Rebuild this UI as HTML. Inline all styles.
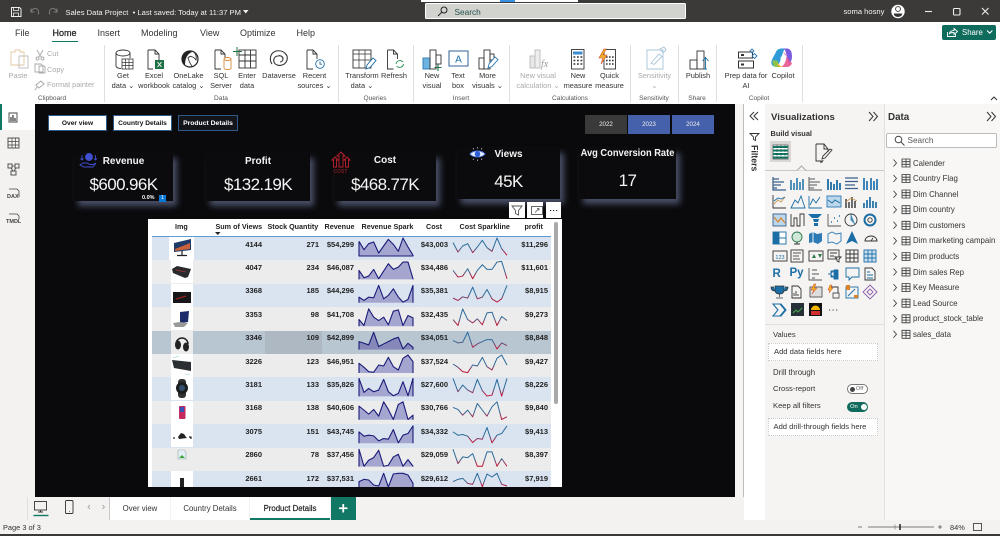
<!DOCTYPE html>
<html><head><meta charset="utf-8"><style>
*{box-sizing:border-box}
html,body{margin:0;padding:0;width:1000px;height:536px;overflow:hidden;background:#f3f2f1;font-family:"Liberation Sans",sans-serif;color:#252423}
body{filter:blur(.25px)}
.a{position:absolute}
svg{position:absolute;overflow:visible}
.t{position:absolute;white-space:nowrap}
.lab{position:absolute;text-align:center;font-size:7.4px;line-height:10.3px;color:#333;white-space:nowrap;transform:translateX(-50%);top:71px}
.dis{color:#aaa}
.gl{position:absolute;top:95px;font-size:6.6px;color:#555;transform:translateX(-50%);white-space:nowrap}
.sep{position:absolute;top:45px;height:57px;width:1px;background:#e1dfdd}
.tab{position:absolute;top:28px;font-size:9px;color:#333}
.btn{position:absolute;top:115px;height:16px;width:59px;background:#fff;border:1px solid #2d5a88;color:#111;font-size:6.6px;font-weight:bold;text-align:center;line-height:15px}
.yr{position:absolute;top:115px;height:19px;width:42px;color:#eee;font-size:6.2px;text-align:center;line-height:19px}
.card{position:absolute;background:#0b0b0d;box-shadow:4px 5px 6px #4a5068;color:#f5f5f5;text-align:center}
.card .h{position:absolute;left:0;right:0;font-weight:bold;font-size:10px;transform:scaleX(.95)}
.card .v{position:absolute;left:0;right:0;font-size:17px;letter-spacing:-.6px}
.r{position:absolute;left:152px;width:399px;height:23.4px}
.r b{position:absolute;top:2.5px;font-size:7.5px;color:#222;font-weight:bold;line-height:10px}
.r b:nth-of-type(1){right:289px}.r b:nth-of-type(2){right:232px}.r b:nth-of-type(3){right:197px}.r b:nth-of-type(4){right:103px}.r b:nth-of-type(5){right:3px}
.o{background:#d9e4f0}.e{background:#ececec}
.th{position:absolute;top:222px;font-size:7.2px;font-weight:bold;color:#222;white-space:nowrap;line-height:10px}
.thumb{position:absolute;left:17px;top:0;width:25px;height:23px;background:#fff}
.d{position:absolute;left:913px;font-size:7.85px;color:#333;white-space:nowrap;line-height:10px}
.sec{position:absolute;font-size:7.6px;color:#333;white-space:nowrap;line-height:10px}
.well{position:absolute;left:768px;width:110px;height:18px;background:#fff;border:1px dotted #ccc;font-size:7.6px;color:#333;line-height:16px;padding-left:5px;white-space:nowrap}
.ptab{position:absolute;top:497px;height:23px;background:#fff;font-size:7.8px;color:#333;text-align:center;line-height:23px;white-space:nowrap}
</style></head><body>

<!-- title bar -->
<div class="a" style="left:0;top:0;width:1000px;height:21.5px;background:#3b3a39"></div>
<div class="a" style="left:421px;top:0;width:157px;height:1.5px;background:#fff"></div>
<div class="a" style="left:500px;top:0;width:15px;height:1.5px;background:#3b8fe0"></div>
<svg style="left:0;top:0" width="100" height="22" fill="none">
<path d="M11.5 7.5h8l1.5 1.5v7.500h-9.500z" stroke="#eee"/><path d="M13.500 7.500v3h5v-3M13.500 16.500v-3.500h5v3.500" stroke="#eee" stroke-width=".8"/>
<path d="M31 12c1-3 4-4.500 6-3 2 1.500 2 4 1 5.500M31 8.500v3.500h3.500" stroke="#7d7c7b"/>
<path d="M57 12c-1-3-4-4.500-6-3-2 1.500-2 4-1 5.500M57 8.500v3.500h-3.500" stroke="#7d7c7b"/>
</svg>
<div class="t" style="left:65.500px;top:7.500px;font-size:7.600px;line-height:10px;color:#f2f2f2">Sales Data Project &nbsp;• Last saved: Today at 11:37 PM</div>
<svg style="left:243px;top:10px" width="6" height="4"><path d="M0 0h5.500l-2.750 3.500z" fill="#eee"/></svg>
<div class="a" style="left:425px;top:3px;width:261px;height:16px;background:#d2d2cf;border:1px solid #fff;border-radius:1.500px"></div>
<svg style="left:437px;top:6px" width="12" height="11" fill="none" stroke="#222"><circle cx="7" cy="4" r="3"/><path d="M4.800 6.200L1 10"/></svg>
<div class="t" style="left:454.500px;top:6.500px;font-size:8.300px;line-height:10px;color:#24514a">Search</div>
<div class="t" style="left:843.500px;top:7px;font-size:7.600px;line-height:10px;color:#f2f2f2">soma hosny</div>
<svg style="left:890px;top:3px" width="110" height="18" fill="none">
<circle cx="8" cy="8.500" r="6.700" fill="#fff"/><circle cx="8" cy="6" r="2.400" stroke="#333" stroke-width=".9"/><path d="M3.800 10.500h8.400c0 2.200-1.800 3.400-4.200 3.400s-4.200-1.200-4.200-3.400z" fill="#333"/>
<path d="M35 8.500h7" stroke="#eee" stroke-width="1.100"/>
<rect x="63.500" y="5.500" width="6.500" height="6.500" rx="1" stroke="#eee" stroke-width="1.100"/>
<path d="M92 5l6.500 6.500M98.500 5L92 11.500" stroke="#eee" stroke-width="1.100"/>
</svg>

<!-- ribbon -->
<div class="a" style="left:0;top:21.500px;width:1000px;height:83px;background:#fff"></div>
<div class="tab" style="left:15px">File</div>
<div class="tab" style="left:52.500px;color:#222;-webkit-text-stroke:.25px #222">Home</div>
<div class="a" style="left:52px;top:40.500px;width:26px;height:1.600px;background:#117865"></div>
<div class="tab" style="left:97.500px">Insert</div>
<div class="tab" style="left:141px">Modeling</div>
<div class="tab" style="left:200px">View</div>
<div class="tab" style="left:240px">Optimize</div>
<div class="tab" style="left:296.500px">Help</div>
<div class="a" style="left:942px;top:25px;width:54px;height:15px;background:#0f6b5c;border-radius:2px"></div>
<svg style="left:946px;top:27px" width="50" height="11" fill="none" stroke="#fff" stroke-width=".9"><path d="M1.500 5v4.500h8V7M3.500 6.500c.5-2 2-3 4.500-3V1.500l3.500 3-3.500 3V5.500c-2 0-3.500 0-4.500 1z"/><path d="M41 3.500l2.700 2.700 2.700-2.700" stroke-width="1.100"/></svg>
<div class="t" style="left:962px;top:27.500px;font-size:7.800px;line-height:10px;color:#fff">Share</div>

<div class="sep" style="left:104px"></div><div class="sep" style="left:338px"></div><div class="sep" style="left:413px"></div><div class="sep" style="left:509px"></div><div class="sep" style="left:630px"></div><div class="sep" style="left:678px"></div><div class="sep" style="left:716px"></div><div class="sep" style="left:802px"></div>

<!-- ribbon icons -->
<svg style="left:0;top:44px" width="830" height="30" fill="none" stroke="#333" stroke-width=".9">
<!-- paste -->
<path d="M11 8h4V6h5v2h4v13H11z" stroke="#e3c7a0"/><rect x="19" y="12" width="9" height="12" stroke="#bbb"/>
<path d="M37 6l4 7M43 6l-4 7" stroke="#aaa"/><circle cx="37.500" cy="14.500" r="1.500" stroke="#aaa"/><circle cx="42.500" cy="14.500" r="1.500" stroke="#aaa"/>
<path d="M35 20h6l2 2v6h-8zM39 22h5l1 1v6h-6z" stroke="#aaa"/>
<!-- get data -->
<ellipse cx="123" cy="9" rx="7" ry="3"/><path d="M116 9v13c0 1.500 2.500 2.500 5 2.500M130 9v5"/><rect x="122" y="15" width="11" height="10" stroke-width=".8"/><path d="M122 18.500h11M122 21.500h11M125.500 15v10M129 15v10" stroke-width=".7"/>
<!-- excel -->
<path d="M148 6h7l4 4v7M148 6v19h5M155 6v4h4"/><rect x="155" y="16" width="9" height="9" fill="#1e7145" stroke="none"/><path d="M157.500 18l4 5M161.500 18l-4 5" stroke="#fff"/>
<!-- onelake -->
<circle cx="190" cy="15" r="8" stroke="#222" stroke-width="1.200"/><path d="M190 7a8 8 0 0 0-8 8c0 3 2 5 3 6 0-6 2-11 7-13z" fill="#222" stroke="none"/><path d="M192 7c3 1 5 5 4 9-2-3-6-5-8-2 1 3 2 6 4 8" stroke-width=".9"/>
<!-- sql -->
<path d="M215 6h6l4 4v4M215 6v19h6M221 6v4h4"/><ellipse cx="227.500" cy="15" rx="3.500" ry="1.500" stroke="#d98c3d"/><path d="M224 15v9c0 2 7 2 7 0v-9" stroke="#d98c3d"/>
<!-- enter data -->
<rect x="239" y="6" width="17" height="18"/><path d="M239 11h17M239 17h17M245 6v18M250.500 6v18"/><path d="M237 3v9M233 7.500h9" stroke="#1e7145" stroke-width="1"/>
<!-- dataverse -->
<path d="M272 20c-3-4-2-11 4-13 5-1 9 1 11 5 1 4-1 8-5 9-3 1-7 0-8-3-1-3 1-6 4-6 3-1 5 1 5 3s-2 3-3 3" stroke-width="1.100"/>
<!-- recent -->
<path d="M307 6h6l4 4v5M307 6v19h6M313 6v4h4"/><circle cx="320" cy="20" r="4.300" stroke="#1b6ea5"/><path d="M320 17.500v2.700h2" stroke="#1b6ea5"/>
<!-- transform -->
<rect x="353" y="6" width="18" height="18"/><path d="M353 10h18M353 16h18M359 6v18M365 6v18" stroke-width=".7"/><path d="M366 25l1-4 6-7 3 2.500-6 7z" stroke="#1b6ea5" fill="#fff"/>
<!-- refresh -->
<path d="M387.500 6h6l4 4v5M387.500 6v19h6M393.500 6v4h4"/><path d="M396 20a4 4 0 0 1 7-2M403.500 20a4 4 0 0 1-7 2" stroke="#1e8449"/>
<!-- new visual -->
<rect x="423" y="14" width="7" height="11" fill="#6fb3e0" stroke="#2b79b5"/><rect x="430" y="6" width="6" height="19"/><rect x="436" y="11" width="5" height="9"/><path d="M438 20v7M434.500 23.500h7" stroke="#1e7145" stroke-width="1.100"/>
<!-- text box -->
<rect x="449" y="7" width="19" height="15" stroke="#1b4f8c"/><text x="458.500" y="18.500" font-family="Liberation Sans" font-size="10" fill="#1b6ea5" stroke="none" text-anchor="middle">A</text>
<!-- more visuals -->
<rect x="479" y="14" width="5" height="11"/><rect x="484" y="6" width="6" height="19"/><rect x="490" y="10" width="4" height="6"/><path d="M488 24l1-4 6-7 3 2.500-6 7z" stroke="#2b79b5" fill="#fff"/>
<!-- new visual calc -->
<g stroke="#bbb"><rect x="530" y="12" width="5" height="12" fill="#e8e8e8"/><rect x="535" y="6" width="5" height="18" fill="#eee"/></g>
<text x="541" y="23" font-family="Liberation Serif" font-style="italic" font-size="10" fill="#999" stroke="none">fx</text>
<!-- new measure -->
<rect x="571.500" y="5.500" width="12.500" height="19.500" fill="#fff"/><rect x="573" y="7.500" width="9.500" height="3" fill="#3c8dd0" stroke="none"/>
<path d="M573.500 13h1.800M577 13h1.800M580.500 13h1.800M573.500 16.500h1.800M577 16.500h1.800M580.500 16.500h1.800M573.500 20h1.800M577 20h1.800M580.500 20h1.800" stroke-width="1.500"/>
<!-- quick measure -->
<rect x="604" y="5.500" width="11.500" height="19.500"/><path d="M606 13h1.600M609 13h1.600M612 13h1.600M606 16.500h1.600M609 16.500h1.600M612 16.500h1.600M606 20h1.600M609 20h1.600M612 20h1.600" stroke-width="1.500"/>
<path d="M604 5l-5 9h4l-2 6 6-9h-4l3-6z" fill="#f0b429" stroke="#d24726" stroke-width=".6"/>
<!-- sensitivity -->
<path d="M647 6h16v19h-16z" stroke="#a8c5d8"/><path d="M651 19l8-9 3 2.500-8 8z" stroke="#a8c5d8"/><path d="M660 5l4-2 2 3-3 3z" stroke="#a8c5d8"/>
<!-- publish -->
<rect x="690" y="16" width="7" height="9"/><rect x="697" y="7" width="7" height="18"/><path d="M704 25h3M705.500 25v-11M702.500 17l3-3.500 3 3.500" stroke="#1b6ea5"/>
<!-- prep data -->
<rect x="738.500" y="8" width="14" height="6" stroke-width="1"/><rect x="738.500" y="17" width="15" height="7" stroke-width="1"/><rect x="741" y="10" width="3" height="2" fill="#333" stroke="none"/><rect x="741" y="19.500" width="3" height="2" fill="#333" stroke="none"/>
<path d="M750 7l2-2 2 2-2 2zM752 12l2.500-2.500 2.500 2.500-2.500 2.500z" stroke="#2b79b5"/>
<!-- copilot -->
<path d="M776 8c1-3 4-3.500 6-3.500h5c-2 0-3 1-4 4l-3 9c-1 3-3 5-6 5-3-1-3-4-2-7z" fill="#2f9bd9" stroke="none"/>
<path d="M782 4.500h5c3 0 5 2.500 5 8 0 3-1 5-2 6.500-1 1-1.500 1-2-1l-2-9c-.5-3-2-4.500-4-4.500z" fill="#7b5ce0" stroke="none"/>
<path d="M783 8.500c3 .5 4 3.500 3 7-1 4-3 7-6 7.500h7c2 0 4-1 5-4-1-1-3-2-4-5z" fill="#e8578f" stroke="none" opacity=".9"/>
<path d="M773 16c-1 3 0 7 3 7h6c-3-1-4-3-4-6z" fill="#8bc34a" stroke="none"/>
<path d="M778 19c1 2 3 4 6 4h-3c-3 0-5-2-3-4z" fill="#f2b233" stroke="none"/>
<circle cx="783" cy="14.500" r="2.500" fill="#fff" stroke="none"/>
</svg>

<div class="lab dis" style="left:18px;top:71px">Paste</div>
<div class="t dis" style="left:47px;top:48.500px;font-size:7.300px;line-height:10px;color:#aaa">Cut</div>
<div class="t dis" style="left:47px;top:64.500px;font-size:7.300px;line-height:10px;color:#aaa">Copy</div>
<div class="t dis" style="left:47px;top:80px;font-size:7.300px;line-height:10px;color:#aaa">Format painter</div>
<svg style="left:34px;top:79px" width="12" height="12" fill="none" stroke="#aaa"><path d="M2 6l5-4 3 3-5 4zM3 8l-2 3"/></svg>
<div class="lab" style="left:123px">Get<br>data ⌄</div>
<div class="lab" style="left:154px">Excel<br>workbook</div>
<div class="lab" style="left:188.500px">OneLake<br>catalog ⌄</div>
<div class="lab" style="left:221px">SQL<br>Server</div>
<div class="lab" style="left:247px">Enter<br>data</div>
<div class="lab" style="left:279px">Dataverse</div>
<div class="lab" style="left:314.500px">Recent<br>sources ⌄</div>
<div class="lab" style="left:362px">Transform<br>data ⌄</div>
<div class="lab" style="left:394px">Refresh</div>
<div class="lab" style="left:432px">New<br>visual</div>
<div class="lab" style="left:458px">Text<br>box</div>
<div class="lab" style="left:487.500px">More<br>visuals ⌄</div>
<div class="lab dis" style="left:538px">New visual<br>calculation ⌄</div>
<div class="lab" style="left:578px">New<br>measure</div>
<div class="lab" style="left:609.500px">Quick<br>measure</div>
<div class="lab dis" style="left:654.500px">Sensitivity<br>⌄</div>
<div class="lab" style="left:698px">Publish</div>
<div class="lab" style="left:746px">Prep data for<br>AI</div>
<div class="lab" style="left:783px">Copilot</div>
<div class="gl" style="left:52px">Clipboard</div><div class="gl" style="left:221px">Data</div><div class="gl" style="left:375px">Queries</div><div class="gl" style="left:461px">Insert</div><div class="gl" style="left:570px">Calculations</div><div class="gl" style="left:654px">Sensitivity</div><div class="gl" style="left:697px">Share</div><div class="gl" style="left:759px">Copilot</div>
<svg style="left:990px;top:96px" width="8" height="5" fill="none" stroke="#333"><path d="M1 4l3-3 3 3"/></svg>

<!-- left rail -->
<div class="a" style="left:0;top:104px;width:2px;height:26px;background:#117865"></div>
<div class="a" style="left:2px;top:104px;width:33px;height:26px;background:#fff"></div>
<svg style="left:0;top:104px" width="35" height="125" fill="none" stroke="#444" stroke-width=".9">
<path d="M9 18V9h8v9z"/><path d="M11 17v-4M13 17v-6M15 17v-3" stroke-width="1.300"/>
<rect x="8" y="34" width="11" height="10"/><path d="M8 37.500h11M8 41h11M12 34v10M15.500 34v10" stroke-width=".7"/>
<rect x="8" y="60" width="4" height="4"/><rect x="15" y="60" width="4" height="4"/><rect x="11" y="67" width="5" height="4"/><path d="M12 62h3M11 64l2 3M16 64l-2 3" stroke-width=".7"/>
<path d="M9 85h8l2 2v6" stroke-width=".8"/><path d="M9 110h8l2 2v3" stroke-width=".8"/>
</svg>
<div class="t" style="left:7px;top:194px;font-size:5.500px;font-weight:bold;color:#444;line-height:7px">DAX</div>
<div class="t" style="left:6px;top:219px;font-size:5.500px;font-weight:bold;color:#444;line-height:7px">TMDL</div>

<!-- canvas -->
<div class="a" style="left:35px;top:104px;width:700px;height:393px;background:#0a0a0c"></div>
<div class="btn" style="left:48px">Over view</div>
<div class="btn" style="left:113px">Country Details</div>
<div class="btn" style="left:178px;width:60px;background:#14151a;color:#fff;font-size:6.800px">Product Details</div>
<div class="yr" style="left:585px;background:#3a3a3a">2022</div>
<div class="yr" style="left:628px;background:#4561ab">2023</div>
<div class="yr" style="left:672px;background:#4561ab">2024</div>

<div class="card" style="left:74px;top:153px;width:99px;height:48px"><div class="h" style="top:1.500px;font-size:10.500px">Revenue</div><div class="v" style="top:21.500px">$600.96K</div></div>
<div class="card" style="left:206px;top:153px;width:104px;height:48px"><div class="h" style="top:1.500px;font-size:10.500px">Profit</div><div class="v" style="top:21.500px">$132.19K</div></div>
<div class="card" style="left:334px;top:153px;width:102px;height:48px"><div class="h" style="top:.500px;font-size:10.500px">Cost</div><div class="v" style="top:21.500px">$468.77K</div></div>
<div class="card" style="left:457px;top:148px;width:103px;height:51px"><div class="h" style="top:-.500px;font-size:10.500px">Views</div><div class="v" style="top:23.500px">45K</div></div>
<div class="card" style="left:579px;top:148px;width:97px;height:51px"><div class="h" style="top:-.500px;left:-5px;right:-5px;font-size:9.800px;white-space:nowrap">Avg Conversion Rate</div><div class="v" style="top:22.500px">17</div></div>
<div class="t" style="left:142px;top:194.500px;font-size:5.500px;font-weight:bold;color:#fff;line-height:7px">0.0%</div>
<div class="a" style="left:159px;top:195px;width:7px;height:7px;background:#0a78d7;color:#fff;font-size:5.500px;text-align:center;line-height:7px">1</div>
<!-- card icons -->
<svg style="left:79px;top:152px" width="20" height="17" fill="none" stroke="#3f4fd0" stroke-width=".9">
<circle cx="10" cy="5" r="3.500" fill="#3f4fd0"/><path d="M3 3v5M1.500 6.500L3 8l1.500-1.500M16.500 3v5M15 6.500L16.500 8 18 6.500"/><path d="M1 13l3-2h4l3 1.500h3l3-1.500-3 4H5z"/>
</svg>
<svg style="left:330px;top:151px" width="22" height="26" fill="none" stroke="#c3202e" stroke-width=".9">
<path d="M11 1l4 4h-2v11H9V5H7zM5 6l3 3H6.500v7H3.500V9H2zM17 6l3 3h-1.500v7h-3V9H14z"/>
</svg>
<div class="t" style="left:333.500px;top:168.500px;font-size:5px;font-weight:bold;color:#7f1d25;line-height:6px">COST</div>
<svg style="left:469px;top:147px" width="18" height="14"><path d="M1 7c3-4 12-4 15 0-3 4-12 4-15 0z" fill="#eaf2ff" stroke="#4a6fdc"/><circle cx="8.500" cy="7" r="2.800" fill="#2f5bd8"/><path d="M8.500 0v1.500M4 1l.7 1.300M13 1l-.7 1.300M8.500 12.500V14M4 13l.7-1.300M13 13l-.7-1.300" stroke="#cdd6f5" stroke-width=".7"/></svg>

<!-- visual header -->
<div class="a" style="left:509px;top:202px;width:16px;height:16px;background:#fff"></div>
<div class="a" style="left:527px;top:202px;width:16px;height:16px;background:#fff"></div>
<div class="a" style="left:546px;top:202px;width:15px;height:16px;background:#fff"></div>
<svg style="left:509px;top:202px" width="52" height="16" fill="none" stroke="#555" stroke-width=".9">
<path d="M3 4h10L9.500 8.500V13l-3-1.500v-3z"/><rect x="22.500" y="4.500" width="11" height="8"/><path d="M26 10.500l4-4M28 6.500h2v2" stroke-width=".8"/>
<path d="M41 8.500h1.200M44 8.500h1.200M47 8.500h1.200" stroke="#222" stroke-width="1.100"/>
</svg>

<!-- table -->
<div class="a" style="left:148px;top:219px;width:414px;height:268px;background:#fff;overflow:hidden">
<div class="a" style="left:-148px;top:-219px;width:1000px;height:536px">
<div class="th" style="left:175px">Img</div>
<div class="th" style="left:215.500px">Sum of Views</div>
<div class="th" style="left:267.500px">Stock Quantity</div>
<div class="th" style="left:324.500px">Revenue</div>
<div class="th" style="left:361.500px">Revenue Spark</div>
<div class="th" style="left:426px">Cost</div>
<div class="th" style="left:459.500px">Cost Sparkline</div>
<div class="th" style="left:524.500px">profit</div>
<svg style="left:215px;top:232px" width="6" height="4"><path d="M0 0h5.500L2.750 3z" fill="#222"/></svg>
<div class="a" style="left:152px;top:236px;width:399px;height:1px;background:#5b9bd5"></div>

<div class="r o" style="top:237px"><div class="thumb" style="left:17px;width:25px"><svg width="25" height="23"><path d="M5 6l17-4v11l-17 2z" fill="#1f3a66"/><path d="M6 12l15-6v6l-15 2z" fill="#c8603c"/><path d="M13 14v4M8 18.500h10" stroke="#222" stroke-width="1.200"/></svg></div><b>4144</b><b>271</b><b>$54,299</b><b>$43,003</b><b>$11,296</b></div>
<div class="r e" style="top:260.400px"><div class="thumb" style="left:19px;width:22px"><svg width="22" height="23"><path d="M1 9l5-3 14 3-3 8-3 1-12-5z" fill="#2a2a2e"/><path d="M5 10l10 2" stroke="#a33" stroke-width=".8"/></svg></div><b>4047</b><b>234</b><b>$46,087</b><b>$34,486</b><b>$11,601</b></div>
<div class="r o" style="top:283.800px"><div class="thumb" style="left:19px;width:22px"><svg width="22" height="23"><rect x="2" y="8" width="18" height="11" fill="#17171a"/><path d="M5 15l10-3" stroke="#a22" stroke-width="1"/></svg></div><b>3368</b><b>185</b><b>$44,296</b><b>$35,381</b><b>$8,915</b></div>
<div class="r e" style="top:307.200px"><div class="thumb" style="left:19px;width:22px"><svg width="22" height="23"><path d="M9 5l9-1-1 11-8 1z" fill="#1d2b6b"/><path d="M2 16l7-1 8 1-4 4-9 0z" fill="#999"/></svg></div><b>3353</b><b>98</b><b>$41,708</b><b>$32,435</b><b>$9,273</b></div>
<div class="r" style="top:330.600px;background:#b8c6d2"><div class="a" style="left:0;top:0;height:23.400px;width:0"></div><div class="a" style="left:113px;top:0;width:56.500px;height:23.400px;background:#aeb8c2"></div><div class="thumb" style="left:19px;width:22px;background:#ececec"><svg width="22" height="23" fill="none"><path d="M5 13a6 6 0 0 1 12 0" stroke="#222" stroke-width="1.500"/><ellipse cx="7" cy="14" rx="3" ry="4.500" fill="#222"/><ellipse cx="15" cy="16" rx="3" ry="4.500" fill="#222"/></svg></div><b>3346</b><b>109</b><b>$42,899</b><b>$34,051</b><b>$8,848</b></div>
<div class="r e" style="top:354px"><div class="thumb" style="left:19px;width:22px"><svg width="22" height="23"><path d="M1 6l19 2v9l-17-3z" fill="#2b2e33"/><path d="M2 4l6-2M14 20l5 1" stroke="#9cc" stroke-width=".6"/></svg></div><b>3226</b><b>123</b><b>$46,951</b><b>$37,524</b><b>$9,427</b></div>
<div class="r o" style="top:377.400px"><div class="thumb" style="left:19px;width:22px"><svg width="22" height="23"><rect x="7" y="2" width="8" height="19" rx="3" fill="#333"/><circle cx="11" cy="11" r="6" fill="#1d1d20"/><circle cx="11" cy="11" r="3" fill="#35506e"/></svg></div><b>3181</b><b>133</b><b>$35,826</b><b>$27,600</b><b>$8,226</b></div>
<div class="r e" style="top:400.800px"><div class="thumb" style="left:19px;width:22px"><svg width="22" height="23"><rect x="8" y="5" width="6.500" height="13" rx="1" fill="#c62a5c"/><rect x="9" y="6" width="4" height="5" fill="#3753b8"/></svg></div><b>3168</b><b>138</b><b>$40,606</b><b>$30,766</b><b>$9,840</b></div>
<div class="r o" style="top:424.200px"><div class="thumb" style="left:19px;width:22px"><svg width="22" height="23"><path d="M7 13l3-4 3 1 2 3 1 1-8 1z" fill="#222"/><path d="M2 14h2M18 13h2v2" stroke="#333" stroke-width="1.200"/></svg></div><b>3075</b><b>151</b><b>$43,745</b><b>$34,332</b><b>$9,413</b></div>
<div class="r e" style="top:447.600px"><svg style="left:25px;top:1px" width="10" height="11"><path d="M1 1h6l2 2v7H1z" fill="#e4ecf6" stroke="#9aa"  stroke-width=".6"/><path d="M2 9l3-3 3 3z" fill="#3fa540"/></svg><b>2860</b><b>78</b><b>$37,456</b><b>$29,059</b><b>$8,397</b></div>
<div class="r o" style="top:471px"><div class="thumb" style="left:19px;width:22px"><svg width="22" height="23"><rect x="9" y="7" width="4" height="9" fill="#222"/></svg></div><b>2661</b><b>172</b><b>$37,531</b><b>$29,612</b><b>$7,919</b></div>

<svg style="left:0;top:0" width="1000" height="536" fill="none" stroke-linejoin="round">
<defs><linearGradient id="g" x1="0" y1="0" x2="0" y2="1"><stop offset="0" stop-color="#26689c"/><stop offset=".55" stop-color="#2f6c99"/><stop offset=".8" stop-color="#9a2c55"/><stop offset="1" stop-color="#c8102e"/></linearGradient></defs>
<g transform="translate(359,237) scale(.3333)" fill="#a5a6d0" stroke="none">
<polygon points="0,13 15,38 29,20 44,15 59,48 74,27 88,7 103,22 118,43 132,3 147,30 162,55 162,57 0,57"/>
<polyline points="0,13 15,38 29,20 44,15 59,48 74,27 88,7 103,22 118,43 132,3 147,30 162,55 162,57 0,57 0,13" fill="none" stroke="#1a1a78" stroke-width="3.300"/>
</g>
<g transform="translate(359,260.400) scale(.3333)" fill="#a5a6d0"><polygon points="0,30 15,52 29,47 44,27 59,55 74,32 88,10 103,27 118,20 132,5 147,5 162,55 162,57 0,57"/><polyline points="0,57 0,30 15,52 29,47 44,27 59,55 74,32 88,10 103,27 118,20 132,5 147,5 162,55 162,57" fill="none" stroke="#1a1a78" stroke-width="3.300"/></g>
<g transform="translate(359,283.800) scale(.3333)" fill="#a5a6d0"><polygon points="0,40 15,50 29,40 44,42 59,5 74,45 88,35 103,15 118,40 132,55 147,47 162,5 162,57 0,57"/><polyline points="0,57 0,40 15,50 29,40 44,42 59,5 74,45 88,35 103,15 118,40 132,55 147,47 162,5 162,57" fill="none" stroke="#1a1a78" stroke-width="3.300"/></g>
<g transform="translate(359,307.200) scale(.3333)" fill="#a5a6d0"><polygon points="0,37 15,55 29,5 44,30 59,40 74,30 88,53 103,12 118,8 132,55 147,25 162,32 162,57 0,57"/><polyline points="0,57 0,37 15,55 29,5 44,30 59,40 74,30 88,53 103,12 118,8 132,55 147,25 162,32 162,57" fill="none" stroke="#1a1a78" stroke-width="3.300"/></g>
<g transform="translate(359,330.600) scale(.3333)" fill="#8588b8"><polygon points="0,33 15,38 29,43 44,5 59,48 74,40 88,33 103,25 118,20 132,55 147,38 162,50 162,57 0,57"/><polyline points="0,57 0,33 15,38 29,43 44,5 59,48 74,40 88,33 103,25 118,20 132,55 147,38 162,50 162,57" fill="none" stroke="#1a1a78" stroke-width="3.300"/></g>
<g transform="translate(359,354) scale(.3333)" fill="#a5a6d0"><polygon points="0,28 15,40 29,53 44,55 59,33 74,36 88,10 103,38 118,48 132,13 147,3 162,23 162,57 0,57"/><polyline points="0,57 0,28 15,40 29,53 44,55 59,33 74,36 88,10 103,38 118,48 132,13 147,3 162,23 162,57" fill="none" stroke="#1a1a78" stroke-width="3.300"/></g>
<g transform="translate(359,377.400) scale(.3333)" fill="#a5a6d0"><polygon points="0,3 15,45 29,33 44,43 59,38 74,6 88,43 103,55 118,48 132,13 147,55 162,3 162,57 0,57"/><polyline points="0,57 0,3 15,45 29,33 44,43 59,38 74,6 88,43 103,55 118,48 132,13 147,55 162,3 162,57" fill="none" stroke="#1a1a78" stroke-width="3.300"/></g>
<g transform="translate(359,400.800) scale(.3333)" fill="#a5a6d0"><polygon points="0,16 15,28 29,40 44,26 59,46 74,3 88,26 103,56 118,11 132,3 147,56 162,43 162,57 0,57"/><polyline points="0,57 0,16 15,28 29,40 44,26 59,46 74,3 88,26 103,56 118,11 132,3 147,56 162,43 162,57" fill="none" stroke="#1a1a78" stroke-width="3.300"/></g>
<g transform="translate(359,424.200) scale(.3333)" fill="#a5a6d0"><polygon points="0,23 15,36 29,33 44,35 59,50 74,43 88,45 103,16 118,56 132,33 147,28 162,5 162,57 0,57"/><polyline points="0,57 0,23 15,36 29,33 44,35 59,50 74,43 88,45 103,16 118,56 132,33 147,28 162,5 162,57" fill="none" stroke="#1a1a78" stroke-width="3.300"/></g>
<g transform="translate(359,447.600) scale(.3333)" fill="#a5a6d0"><polygon points="0,5 15,56 29,38 44,30 59,8 74,56 88,53 103,28 118,20 132,56 147,36 162,56 162,57 0,57"/><polyline points="0,57 0,5 15,56 29,38 44,30 59,8 74,56 88,53 103,28 118,20 132,56 147,36 162,56 162,57" fill="none" stroke="#1a1a78" stroke-width="3.300"/></g>
<g transform="translate(359,471) scale(.3333)" fill="#a5a6d0"><polygon points="0,32 15,25 29,27 44,42 59,45 74,7 88,48 103,9 118,7 132,7 147,12 162,37 162,70 0,70"/><polyline points="0,70 0,32 15,25 29,27 44,42 59,45 74,7 88,48 103,9 118,7 132,7 147,12 162,37 162,70" fill="none" stroke="#1a1a78" stroke-width="3.300"/></g>

<g fill="none" stroke="url(#g)" stroke-width="3">
<polyline transform="translate(453,237) scale(.3333)" points="0,17 15,45 29,27 44,20 59,47 73,30 88,10 102,32 117,43 132,3 146,35 162,55"/>
<polyline transform="translate(453,260.400) scale(.3333)" points="0,30 15,50 29,47 44,25 59,55 73,30 88,13 102,27 117,27 132,5 146,3 162,55"/>
<polyline transform="translate(453,283.800) scale(.3333)" points="0,43 15,50 29,39 44,43 59,10 73,45 88,40 102,17 117,45 132,55 146,45 162,5"/>
<polyline transform="translate(453,307.200) scale(.3333)" points="0,37 15,55 29,5 44,37 59,47 73,35 88,53 102,17 117,15 132,55 146,28 162,40"/>
<polyline transform="translate(453,330.600) scale(.3333)" points="0,30 15,37 29,35 44,5 59,50 73,40 88,33 102,27 117,27 132,55 146,37 162,45"/>
<polyline transform="translate(453,354) scale(.3333)" points="0,30 15,40 29,53 44,56 59,33 73,36 88,10 102,38 117,48 132,13 146,3 162,33"/>
<polyline transform="translate(453,377.400) scale(.3333)" points="0,3 15,43 29,23 44,38 59,46 73,6 88,40 102,56 117,53 132,6 146,56 162,3"/>
<polyline transform="translate(453,400.800) scale(.3333)" points="0,20 15,26 29,43 44,28 59,48 73,8 88,28 102,46 117,18 132,3 146,56 162,48"/>
<polyline transform="translate(453,424.200) scale(.3333)" points="0,23 15,33 29,31 44,36 59,55 73,43 88,45 102,10 117,56 132,33 146,28 162,5"/>
<polyline transform="translate(453,447.600) scale(.3333)" points="0,5 15,48 29,28 44,30 59,18 73,56 88,56 102,13 117,13 132,56 146,33 162,56"/>
<polyline transform="translate(453,471) scale(.3333)" points="0,32 15,25 29,22 44,37 59,40 73,7 88,47 102,9 117,18 132,7 146,40 162,45"/>
</g>
</svg>
<div class="a" style="left:554px;top:222px;width:3.500px;height:182px;background:#a9a9a9;border-radius:2px"></div>
</div></div>

<!-- filters strip -->
<div class="a" style="left:735px;top:104px;width:8px;height:393px;background:#f6f5f4"></div>
<div class="a" style="left:743px;top:104px;width:1px;height:430px;background:#bdbdbd"></div>
<div class="a" style="left:744px;top:104px;width:21px;height:416px;background:#fff"></div>
<svg style="left:748px;top:111px" width="12" height="30" fill="none" stroke="#333"><path d="M6 1L2 5l4 4M10 1L6 5l4 4"/><path d="M2 23h9l-3.500 3.500V30l-2-1v-2.500z" stroke-width=".9" transform="translate(0,-.5)"/></svg>
<div class="t" style="left:749.500px;top:145px;font-size:8.800px;font-weight:bold;color:#333;writing-mode:vertical-rl;line-height:9px">Filters</div>

<!-- viz pane -->
<div class="a" style="left:765px;top:104px;width:119px;height:416px;background:#f5f4f3"></div>
<div class="t" style="left:771px;top:111.500px;font-size:9.600px;font-weight:bold;line-height:12px;color:#333">Visualizations</div>
<svg style="left:868px;top:111px" width="11" height="11" fill="none" stroke="#333"><path d="M1 1l4 4.500-4 4.500M5.500 1l4 4.500-4 4.500"/></svg>
<div class="t" style="left:770.500px;top:129px;font-size:7.400px;font-weight:bold;line-height:10px;color:#333">Build visual</div>
<div class="a" style="left:770px;top:141px;width:21px;height:21px;background:#d8d7d6"></div>
<svg style="left:770px;top:141px" width="21" height="21"><rect x="3" y="4" width="15" height="14" fill="#fff" stroke="#333" stroke-width=".6"/><path d="M3 6h15M3 9.500h15M3 13h15M3 16.500h15" stroke="#117865" stroke-width="2"/><path d="M7 4v14M11 4v14M15 4v14" stroke="#222" stroke-width=".5" stroke-dasharray="1 1"/></svg>
<svg style="left:814px;top:142px" width="20" height="22" fill="none" stroke="#333" stroke-width=".9"><path d="M2 2h8l4 5v3M2 2v17h6M10 2v5h4"/><path d="M8 17l3-1 7-8-2-1-7 7zM6 20c2 1 3-1 3-2" /></svg>
<div class="a" style="left:765px;top:169.500px;width:119px;height:1px;background:#c9c8c7"></div>
<svg style="left:796px;top:165px" width="12" height="6"><path d="M1 5.500l4.500-4.500L10 5.500" fill="#f5f4f3" stroke="#aaa"/></svg>

<svg style="left:770px;top:176px" width="112" height="146" fill="none" stroke="#333" stroke-width=".9">
<!-- row1 -->
<g stroke="#3a5f8a"><path d="M3 1v13h13M3 3h6M3 6h11M3 9h8M3 12h4" stroke-width="1.200"/></g>
<g><path d="M21 14V4M24 14V7M27 14V2M30 14V6M33 14V3" stroke="#1b6ea5" stroke-width="1.500"/></g>
<path d="M39 1v13h13M39 3h6M39 6h11M39 9h8M39 12h5" stroke="#777" stroke-width="1.200"/>
<path d="M58 14V3M61 14V6M64 14V8M67 14V4M70 14V7" stroke="#1b6ea5" stroke-width="1.800"/>
<path d="M75 2h13M75 5.500h13M75 9h10M75 12.500h13" stroke="#3a5f8a" stroke-width="1.300"/>
<path d="M94 14V2M97 14V5M101 14V2M104 14V5M107 14V3" stroke="#2b79b5" stroke-width="1.800"/>
<!-- row2 -->
<g transform="translate(0,18)"><path d="M3 1v13h13"/><path d="M4 10l4-4 3 2 4-5" stroke="#c95"/><path d="M4 7l4-3 3 1 4-2" stroke="#1b6ea5"/>
<path d="M21 14l4-8 3 3 3-7 4 12z" stroke="#1b6ea5"/><path d="M39 2v12h13M40 11l3-6 3 4 4-6" stroke="#1b6ea5"/>
<rect x="57" y="2" width="14" height="11" fill="#bcd7ec" stroke="#2b79b5"/><path d="M58 6l4 3 3-3 5 3" stroke="#1b6ea5"/>
<path d="M76 14V5M79 14V8M82 14V3M85 14V7" stroke="#555" stroke-width="1.700"/><path d="M76 8l5-4 6 3" stroke="#c95"/>
<path d="M94 14V9M97 14V6M100 14V3M103 14V7M106 14V8" stroke="#1b6ea5" stroke-width="1.700"/></g>
<!-- row3 -->
<g transform="translate(0,36)"><rect x="3" y="2" width="13" height="12" fill="#bcd7ec" stroke="#3a5f8a"/><path d="M4 5l4 5 3-4 4 5" stroke="#d9822b" stroke-width="1.200"/>
<path d="M21 2v12h3V6h3v8h3V2h4v12" stroke="#333"/>
<path d="M38 2h14l-4 4v0H42zM43 7h6l-1 3h-4zM44 11h4v3h-4z" fill="#1b6ea5" stroke="none"/>
<path d="M58 2v12h13" stroke="#555"/><path d="M61 10h1M64 6h1M67 9h1M69 4h1" stroke="#1b6ea5" stroke-width="1.600"/>
<circle cx="81" cy="8" r="6"/><path d="M81 2v6l4 4" fill="#1b6ea5" stroke="#1b6ea5" opacity=".8"/>
<circle cx="100" cy="8" r="5.500" stroke="#1b6ea5" stroke-width="2"/><circle cx="100" cy="8" r="2.200"/></g>
<!-- row4 -->
<g transform="translate(0,54)"><rect x="3" y="2" width="6" height="12" fill="#1b6ea5" stroke="#1b6ea5"/><rect x="9" y="2" width="7" height="6" fill="#fff" stroke="#1b6ea5"/><rect x="9" y="8" width="7" height="6" fill="#fff" stroke="#1b6ea5"/>
<circle cx="27" cy="7" r="5" stroke="#2c7a4b" fill="#cfe7d6"/><path d="M27 12v2M24 14h6" />
<path d="M39 4l4-2 4 2 5-1v8l-4 3-5-2-4 1z" fill="#2b79b5" stroke="none"/><path d="M43 2v10" stroke="#fff"/>
<path d="M58 4l4-2 4 2 5-1v8l-4 3-5-2-4 1z" stroke="#2b79b5"/>
<path d="M82 1l-6 13 6-3 6 3z" fill="#1b6ea5" stroke="none"/>
<path d="M95 11a6 5 0 0 1 12 0zM101 11l2-3" stroke="#333"/></g>
<!-- row5 -->
<g transform="translate(0,72)"><rect x="3" y="3" width="14" height="10" stroke="#333"/><text x="10" y="11" font-family="Liberation Sans" font-size="5.500" fill="#1b6ea5" stroke="none" text-anchor="middle">123</text>
<rect x="21" y="2" width="12" height="12"/><path d="M23 5h8M23 8h6M23 11h7" stroke="#555"/>
<rect x="39" y="3" width="14" height="10"/><path d="M42 10l2-4 2 4zM48 6h4l-2 4z" fill="#2c7a4b" stroke="none"/>
<rect x="58" y="2" width="11" height="9"/><path d="M60 5h7M60 8h4"/><path d="M65 9h6l-2 2v3l-2-1v-2z" fill="#fff"/>
<rect x="76" y="2" width="12" height="12"/><path d="M76 6h12M76 10h12M80 2v12M84 2v12"/>
<rect x="94" y="2" width="12" height="12" fill="#cfe1f1" stroke="#1b6ea5"/><path d="M94 6h12M94 10h12M98 2v12M102 2v12" stroke="#1b6ea5"/></g>
<!-- row6 -->
<g transform="translate(0,90)">
<path d="M39 2v12h13M42 4h5M42 8h7M42 12h3" stroke="#555"/>
<path d="M58 8h3M64 4h4v3h-4zM64 7h4v3h-4zM64 10h4v3h-4zM61 8V5h3M61 8v3h3" stroke="#1b6ea5" fill="#1b6ea5"/>
<path d="M76 2h13v9H82l-3 3v-3h-3z" stroke="#1b6ea5"/>
<path d="M95 2h7l3 3v9H95z"/><path d="M97 6h3M97 9h6M97 12h6" stroke="#1b6ea5"/></g>
<!-- row7 -->
<g transform="translate(0,108)"><path d="M5 2h9v4c0 3-2 4-4.500 4S5 9 5 6zM4 3H1c0 3 2 4 4 4M15 3h3c0 3-2 4-4 4M9.500 10v3M6 14h7" stroke="#333" fill="#1b6ea5" stroke-width=".7"/>
<path d="M22 2h6l3 3v9h-9zM24 12V9M26 12V7M28 12V10"/>
<rect x="40" y="3" width="12" height="10" fill="#ddd" stroke="#555"/><path d="M44 0l-3 6h3l-2 4 5-6h-3l2-4z" fill="#f0b429" stroke="#d24726" stroke-width=".5"/>
<path d="M60 3h8v6h-5"/><path d="M63 9h6v5h-6z" stroke="#555"/><path d="M60 1l-2 5h2l-1 3 4-5h-2l1-3z" fill="#f0b429" stroke="#d24726" stroke-width=".5"/>
<rect x="76" y="3" width="12" height="11" stroke="#1b6ea5"/><path d="M78 12l7-7" stroke="#1b6ea5"/><path d="M76 1h4v5h-4z" fill="#d9822b" stroke="none"/><path d="M84 11h4v3h-4z" fill="#d9822b" stroke="none"/>
<path d="M100 1l7 7-7 7-7-7z" stroke="#8b5ea8"/><path d="M97 8l3-3 3 3-3 3z" stroke="#8b5ea8"/></g>
<!-- row8 -->
<g transform="translate(0,126)"><path d="M3 2h7l5 6-5 6H3l5-6zM9 2h2l5 6-5 6H9" stroke="#1b6ea5" stroke-width="1.100"/>
<rect x="21" y="1" width="13" height="13" fill="#263238" stroke="none"/><path d="M23 11l3-3 2 2 4-4" stroke="#4caf50"/>
<rect x="39" y="1" width="13" height="13" fill="#111" stroke="none"/><path d="M41 8a4.500 4.500 0 0 1 9 0z" fill="#f5b800" stroke="none"/><rect x="41" y="9" width="9" height="4" fill="#d32f2f" stroke="none"/>
<path d="M59 8h1.200M62.500 8h1.200M66 8h1.200" stroke="#333" stroke-width="1.100"/></g>
</svg>
<div class="t" style="left:772.500px;top:267px;font-size:11.500px;font-weight:bold;color:#1b6ea5;line-height:14px">R</div>
<div class="t" style="left:789.500px;top:266px;font-size:11.500px;font-weight:bold;color:#1b6ea5;line-height:14px">Py</div>

<div class="a" style="left:765px;top:324px;width:119px;height:1px;background:#e1dfdd"></div>
<div class="sec" style="left:773px;top:329.500px">Values</div>
<div class="well" style="top:343px">Add data fields here</div>
<div class="sec" style="left:773px;top:368px;font-size:7.800px">Drill through</div>
<div class="sec" style="left:773px;top:384px">Cross-report</div>
<div class="a" style="left:847px;top:384px;width:21px;height:10px;border:1px solid #777;border-radius:5px;background:#fff"></div>
<div class="a" style="left:850px;top:386.500px;width:5px;height:5px;border-radius:50%;background:#444"></div>
<div class="t" style="left:856px;top:385.500px;font-size:5.500px;color:#666;line-height:7px">Off</div>
<div class="sec" style="left:773px;top:401px">Keep all filters</div>
<div class="a" style="left:847px;top:402px;width:21px;height:10px;border-radius:5px;background:#0f6b5c"></div>
<div class="a" style="left:861px;top:404px;width:6px;height:6px;border-radius:50%;background:#fff"></div>
<div class="t" style="left:850px;top:403.500px;font-size:5.800px;color:#fff;line-height:7px">On</div>
<div class="well" style="top:418px;padding-left:4.500px">Add drill-through fields here</div>

<!-- data pane -->
<div class="a" style="left:884px;top:104px;width:116px;height:416px;background:#f8f7f6;border-left:1px solid #e1dfdd"></div>
<div class="t" style="left:888px;top:111.500px;font-size:9.800px;font-weight:bold;line-height:12px;color:#333">Data</div>
<svg style="left:986px;top:111px" width="11" height="11" fill="none" stroke="#333"><path d="M1 1l4 4.500-4 4.500M5.500 1l4 4.500-4 4.500"/></svg>
<div class="a" style="left:886px;top:133px;width:111px;height:15px;background:#fff;border:1px solid #bbb;border-radius:2px"></div>
<svg style="left:894px;top:135px" width="11" height="11" fill="none" stroke="#444"><circle cx="4.500" cy="4.500" r="3.300"/><path d="M7 7l3.500 3.500"/></svg>
<div class="t" style="left:907.500px;top:136px;font-size:8.200px;line-height:10px;color:#555">Search</div>
<svg style="left:890px;top:156px" width="26" height="186" fill="none" stroke="#333" stroke-width=".8">
<path d="M3.500 3.500l3 3.500-3 3.500M3.500 19l3 3.500-3 3.500M3.500 34.700l3 3.500-3 3.500M3.500 50.200l3 3.500-3 3.500M3.500 65.800l3 3.500-3 3.500M3.500 81.400l3 3.500-3 3.500M3.500 97l3 3.500-3 3.500M3.500 112.500l3 3.500-3 3.500M3.500 128.100l3 3.500-3 3.500M3.500 143.700l3 3.500-3 3.500M3.500 159.300l3 3.500-3 3.500M3.500 174.800l3 3.500-3 3.500"/>
<g stroke="#333"><path d="M12 3h8v8h-8zM12 5.700h8M12 8.300h8M16 3v8M12 18.500h8v8h-8zM12 21.200h8M12 23.800h8M16 18.500v8M12 34h8v8h-8zM12 36.700h8M12 39.300h8M16 34v8M12 49.700h8v8h-8zM12 52.400h8M12 55h8M16 49.700v8M12 65.300h8v8h-8zM12 68h8M12 70.600h8M16 65.300v8M12 80.900h8v8h-8zM12 83.600h8M12 86.200h8M16 80.900v8M12 96.500h8v8h-8zM12 99.200h8M12 101.800h8M16 96.500v8M12 112h8v8h-8zM12 114.700h8M12 117.300h8M16 112v8M12 127.600h8v8h-8zM12 130.300h8M12 132.900h8M16 127.600v8M12 143.200h8v8h-8zM12 145.900h8M12 148.500h8M16 143.200v8M12 158.800h8v8h-8zM12 161.500h8M12 164.100h8M16 158.800v8M12 174.300h8v8h-8zM12 177h8M12 179.600h8M16 174.300v8"/></g>
</svg>
<div class="d" style="top:158.500px">Calender</div>
<div class="d" style="top:174.100px">Country Flag</div>
<div class="d" style="top:189.700px">Dim Channel</div>
<div class="d" style="top:205.300px">Dim country</div>
<div class="d" style="top:220.800px">Dim customers</div>
<div class="d" style="top:236.400px">Dim marketing campain</div>
<div class="d" style="top:252px">Dim products</div>
<div class="d" style="top:267.500px">Dim sales Rep</div>
<div class="d" style="top:283.100px">Key Measure</div>
<div class="d" style="top:298.700px">Lead Source</div>
<div class="d" style="top:314.300px">product_stock_table</div>
<div class="d" style="top:329.800px">sales_data</div>

<!-- bottom -->
<div class="a" style="left:0;top:497px;width:744px;height:23px;background:#f3f2f1"></div>
<div class="a" style="left:27px;top:497px;width:1px;height:23px;background:#e1dfdd"></div>
<svg style="left:30px;top:498px" width="80" height="22" fill="none" stroke="#333" stroke-width=".9">
<rect x="4.500" y="3.500" width="12" height="8.500"/><path d="M8 14h5M10.500 12v2"/><path d="M3.500 17.500h15" stroke="#117865" stroke-width="1.400"/>
<rect x="35.500" y="2.500" width="7.500" height="13" rx="1"/><path d="M39 13.500h.6"/>
<path d="M60 7l-2 2 2 2" stroke="#aaa"/><path d="M72.500 7l2 2-2 2" stroke="#aaa"/>
</svg>
<div class="a" style="left:109px;top:497px;width:1px;height:23px;background:#c9c8c7"></div>
<div class="ptab" style="left:110px;width:60px">Over view</div>
<div class="ptab" style="left:171px;width:78px">Country Details</div>
<div class="ptab" style="left:250px;width:80px;color:#222;-webkit-text-stroke:.2px #222">Product Details</div>
<div class="a" style="left:250px;top:518px;width:80px;height:2px;background:#117865"></div>
<div class="a" style="left:331px;top:497px;width:25px;height:23px;background:#117865"></div>
<svg style="left:339px;top:504px" width="9" height="9"><path d="M4.250 0v8.500M0 4.250h8.500" stroke="#fff" stroke-width="1.800"/></svg>
<div class="a" style="left:0;top:520px;width:1000px;height:14px;background:#f3f2f1"></div>
<div class="a" style="left:0;top:534px;width:1000px;height:2px;background:#3b3a39"></div>
<div class="t" style="left:3px;top:523px;font-size:7.400px;line-height:10px;color:#333">Page 3 of 3</div>
<svg style="left:855px;top:521px" width="90" height="12" fill="none" stroke="#555" stroke-width=".8">
<path d="M3 6h4M83 6h4M85 4v4M13 6h66"/><path d="M45 3v6" stroke="#222" stroke-width="1.500"/><path d="M40 3.500v5" stroke="#888"/>
</svg>
<div class="t" style="left:950px;top:523px;font-size:7.400px;line-height:10px;color:#333">84%</div>
<svg style="left:972px;top:522px" width="12" height="10" fill="none" stroke="#555"><rect x="1.500" y="1.500" width="8" height="7"/></svg>
</body></html>
